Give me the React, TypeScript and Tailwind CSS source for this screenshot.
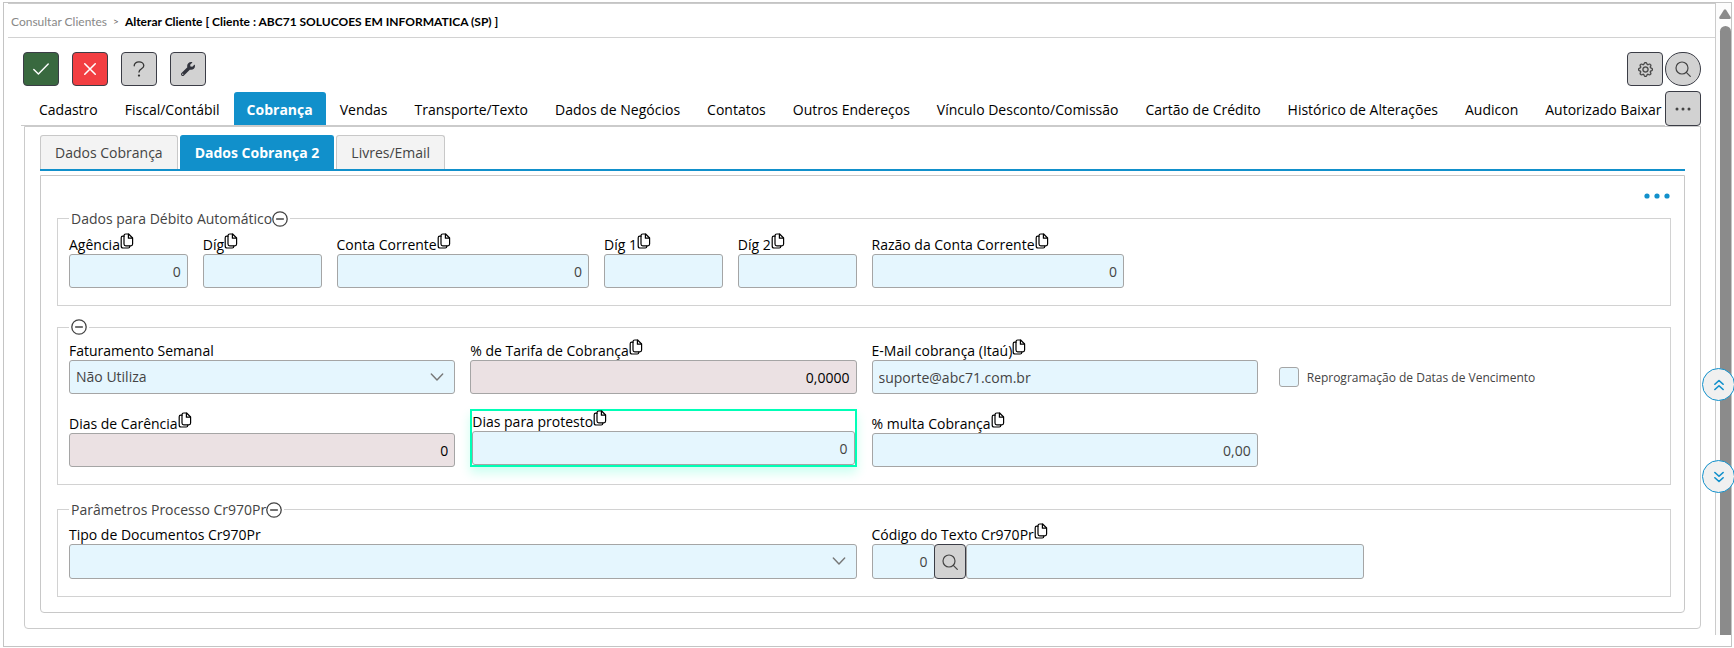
import type { ReactNode, SVGProps } from "react";
import { FaWrench } from "react-icons/fa";
import { BsGear } from "react-icons/bs";
import clsx from "clsx";

const tabs = [
  "Cadastro",
  "Fiscal/Contábil",
  "Cobrança",
  "Vendas",
  "Transporte/Texto",
  "Dados de Negócios",
  "Contatos",
  "Outros Endereços",
  "Vínculo Desconto/Comissão",
  "Cartão de Crédito",
  "Histórico de Alterações",
  "Audicon",
  "Autorizado Baixar",
];

const subTabs = ["Dados Cobrança", "Dados Cobrança 2", "Livres/Email"];

function Icon(props: SVGProps<SVGSVGElement>) {
  return (
    <svg
      viewBox="0 0 16 16"
      fill="none"
      stroke="currentColor"
      strokeLinecap="round"
      strokeLinejoin="round"
      aria-hidden="true"
      {...props}
    />
  );
}

function CopyIcon() {
  return (
    <Icon className="h-4 w-3.5" viewBox="0 0 14 16" strokeWidth="1.2">
      <path d="M4 3.2H2.8Q1.2 3.2 1.2 4.8V13Q1.2 15 3 15H8.2Q9.8 15 9.8 13.2" />
      <path d="M8.6 1H5.8Q4 1 4 2.8V11Q4 12.8 5.8 12.8H10.8Q12.6 12.8 12.6 11V5Z" />
      <path d="M8.4 1.2V5.2H12.4" />
    </Icon>
  );
}

function SearchIcon({ className }: { className: string }) {
  return (
    <Icon className={className} strokeWidth="1.2">
      <circle cx="7" cy="7" r="6" />
      <path d="M11.3 11.3L15.3 15.3" />
    </Icon>
  );
}

function ToolButton({
  label,
  className,
  children,
}: {
  label: string;
  className: string;
  children: ReactNode;
}) {
  return (
    <button
      type="button"
      aria-label={label}
      className={clsx(
        "flex h-[34px] w-9 items-center justify-center border border-[#3b3d46]",
        className
      )}
    >
      {children}
    </button>
  );
}

function Group({
  title,
  legendClass,
  className,
  children,
}: {
  title?: string;
  legendClass: string;
  className?: string;
  children: ReactNode;
}) {
  return (
    <fieldset
      className={clsx(
        "min-w-0 border border-[#d2d2d2] px-[11px] pb-[17px]",
        className
      )}
    >
      <legend className={clsx("px-0.5 text-[#444]", legendClass)}>
        <span className="flex h-full items-center">
          {title}
          <button type="button" aria-label="Recolher">
            <Icon className="size-4" strokeWidth="1.3">
              <circle cx="8" cy="8" r="7.2" />
              <path d="M4.6 8H11.4" />
            </Icon>
          </button>
        </span>
      </legend>
      <div className="grid grid-cols-12 items-end gap-x-[15px] gap-y-[15px] pt-1">
        {children}
      </div>
    </fieldset>
  );
}

function Field({
  id,
  label,
  className,
  copy = true,
  children,
}: {
  id: string;
  label: string;
  className: string;
  copy?: boolean;
  children: ReactNode;
}) {
  return (
    <div className={className}>
      <div className="flex h-5 items-start whitespace-nowrap text-black">
        <label htmlFor={id} className="leading-[22px]">
          {label}
        </label>
        {copy && (
          <button type="button" aria-label={`Copiar ${label}`} className="-mt-px">
            <CopyIcon />
          </button>
        )}
      </div>
      {children}
    </div>
  );
}

function TextBox({
  id,
  value = "",
  right,
  disabled,
  label,
  className = "h-[34px] w-full",
}: {
  id: string;
  value?: string;
  right?: boolean;
  disabled?: boolean;
  label?: string;
  className?: string;
}) {
  return (
    <input
      id={id}
      type="text"
      defaultValue={value}
      readOnly={disabled}
      aria-label={label}
      className={clsx(
        "block min-w-0 rounded-[3px] border border-[#a5a5a5] px-1.5",
        right && "text-right",
        disabled ? "bg-[#ebe1e3] text-black" : "bg-[#e5f6fe] text-[#444]",
        className
      )}
    />
  );
}

function SelectBox({
  id,
  options,
  className = "h-[34px]",
}: {
  id: string;
  options: string[];
  className?: string;
}) {
  return (
    <div className="relative">
      <select
        id={id}
        className={clsx(
          "block w-full appearance-none rounded-[3px] border border-[#a5a5a5] bg-[#e5f6fe] px-1.5 text-[#444]",
          className
        )}
      >
        {options.map((o) => (
          <option key={o}>{o}</option>
        ))}
      </select>
      <Icon
        className="pointer-events-none absolute top-2.5 right-[11px] size-3.5 text-[#777]"
        strokeWidth="1.6"
      >
        <path d="M1.5 4.5L8 11.5L14.5 4.5" />
      </Icon>
    </div>
  );
}

export default function App() {
  return (
    <div className="bg-white pt-0.5 pr-0.5 pb-px pl-[3px] font-['Open_Sans','Segoe_UI',sans-serif] text-sm text-[#444]">
      <div className="relative border border-[#c4c4c4] pb-[11px] pl-1">
        <div className="flex">
          <main className="min-w-0 flex-1 border-t border-r border-[#cbcbcb] pb-1.5">
            <nav className="flex h-[34px] items-center gap-1.5 border-b border-[#d2d2d2] pt-0.5 pl-[3px] font-[Lato,sans-serif] text-xs">
              <a href="#" className="text-[#888]">
                Consultar Clientes
              </a>
              <span className="text-[10px] text-[#666]">&gt;</span>
              <span className="font-bold text-black">
                Alterar Cliente [ Cliente : ABC71 SOLUCOES EM INFORMATICA (SP) ]
              </span>
            </nav>

            <div className="flex items-center gap-[13px] pt-3.5 pr-3.5 pl-[15px]">
              <ToolButton label="Confirmar" className="rounded bg-[#39693f] text-white">
                <Icon className="size-4" strokeWidth="1.4">
                  <path d="M0.8 8.4L5.4 13L15.2 3" />
                </Icon>
              </ToolButton>
              <ToolButton label="Cancelar" className="rounded bg-[#f23e42] text-white">
                <Icon className="size-3.5" strokeWidth="1.8">
                  <path d="M2 2L14 14M14 2L2 14" />
                </Icon>
              </ToolButton>
              <ToolButton label="Ajuda" className="rounded bg-[#d2d2d2] text-[#333]">
                <Icon className="size-4" strokeWidth="1.3">
                  <path d="M3.2 4.8C3.2 2.4 5.2 0.8 8 0.8S12.8 2.4 12.8 4.8C12.8 7.8 8 7.6 8 11" />
                  <circle cx="8" cy="14.6" r="0.5" fill="currentColor" />
                </Icon>
              </ToolButton>
              <ToolButton label="Ferramentas" className="rounded bg-[#d2d2d2] text-[#33353e]">
                <FaWrench className="size-3.5" />
              </ToolButton>
              <div className="ml-auto flex gap-0.5">
                <ToolButton label="Configurações" className="rounded bg-[#d2d2d2]">
                  <BsGear className="size-[15px]" stroke="currentColor" strokeWidth="0.4" />
                </ToolButton>
                <ToolButton label="Pesquisar" className="rounded-full bg-[#d2d2d2]">
                  <SearchIcon className="size-4" />
                </ToolButton>
              </div>
            </div>

            <div className="mt-[5px] flex pr-3.5 pl-[13px]">
              <div className="flex h-[35px] min-w-0 flex-1 items-end gap-px overflow-hidden border-b border-[#cbcbcb] pl-[5px]">
                {tabs.map((tab) => (
                  <button
                    key={tab}
                    type="button"
                    className={clsx(
                      "h-[33px] shrink-0 rounded-t-[3px] px-[13px] pt-0.5 whitespace-nowrap last:pr-0",
                      tab === "Cobrança"
                        ? "bg-[#1190cb] font-bold text-white"
                        : "text-black"
                    )}
                  >
                    {tab}
                  </button>
                ))}
              </div>
              <button
                type="button"
                aria-label="Mais abas"
                className="flex h-[35px] w-9 shrink-0 items-center justify-center rounded border border-[#3b3d46] bg-[#d2d2d2]"
              >
                <svg className="h-1 w-4" viewBox="0 0 16 4" fill="currentColor">
                  <circle cx="2" cy="2" r="1.5" />
                  <circle cx="8" cy="2" r="1.5" />
                  <circle cx="14" cy="2" r="1.5" />
                </svg>
              </button>
            </div>

            <section className="mr-3.5 ml-4 rounded-b border border-[#cbcbcb] px-[15px] pt-2 pb-[15px]">
              <div className="flex gap-0.5 border-b-2 border-[#1190cb]">
                {subTabs.map((tab) => (
                  <button
                    key={tab}
                    type="button"
                    className={clsx(
                      "h-[34px] rounded-t-[3px] border border-b-0 px-3.5",
                      tab === "Dados Cobrança 2"
                        ? "border-[#1190cb] bg-[#1190cb] font-bold text-white"
                        : "border-[#c8c8c8] bg-[#f3f3f3]"
                    )}
                  >
                    {tab}
                  </button>
                ))}
              </div>

              <div className="mt-1 rounded-b border border-[#c8c8c8] pr-[13px] pb-[15px] pl-4">
                <div className="flex h-[30px] justify-end pt-3">
                  <button
                    type="button"
                    aria-label="Opções"
                    className="flex h-4 items-center text-[#1190cb]"
                  >
                    <svg className="h-1.5 w-7" viewBox="0 0 28 6" fill="currentColor">
                      <circle cx="4" cy="3" r="2.6" />
                      <circle cx="14" cy="3" r="2.6" />
                      <circle cx="24" cy="3" r="2.6" />
                    </svg>
                  </button>
                </div>

                <Group title="Dados para Débito Automático" legendClass="h-6 pt-0.5">
                  <Field id="agencia" label="Agência" className="col-span-1">
                    <TextBox id="agencia" value="0" right />
                  </Field>
                  <Field id="dig" label="Díg" className="col-span-1">
                    <TextBox id="dig" />
                  </Field>
                  <Field id="conta" label="Conta Corrente" className="col-span-2">
                    <TextBox id="conta" value="0" right />
                  </Field>
                  <Field id="dig1" label="Díg 1" className="col-span-1">
                    <TextBox id="dig1" />
                  </Field>
                  <Field id="dig2" label="Díg 2" className="col-span-1">
                    <TextBox id="dig2" />
                  </Field>
                  <Field id="razao" label="Razão da Conta Corrente" className="col-span-2">
                    <TextBox id="razao" value="0" right />
                  </Field>
                </Group>

                <Group legendClass="h-[18px]" className="mt-3">
                  <Field
                    id="faturamento"
                    label="Faturamento Semanal"
                    className="col-span-3"
                    copy={false}
                  >
                    <SelectBox id="faturamento" options={["Não Utiliza"]} />
                  </Field>
                  <Field id="tarifa" label="% de Tarifa de Cobrança" className="col-span-3">
                    <TextBox id="tarifa" value="0,0000" right disabled />
                  </Field>
                  <Field id="email" label="E-Mail cobrança (Itaú)" className="col-span-3">
                    <TextBox id="email" value="suporte@abc71.com.br" />
                  </Field>
                  <div className="col-span-3 flex h-[34px] items-center gap-2 pl-1.5">
                    <input
                      id="reprogramacao"
                      type="checkbox"
                      className="size-5 shrink-0 appearance-none rounded-[3px] border border-[#a5a5a5] bg-[#e5f6fe]"
                    />
                    <label htmlFor="reprogramacao" className="pt-0.5 text-xs">
                      Reprogramação de Datas de Vencimento
                    </label>
                  </div>
                  <Field id="carencia" label="Dias de Carência" className="col-span-3">
                    <TextBox id="carencia" value="0" right disabled />
                  </Field>
                  <Field
                    id="protesto"
                    label="Dias para protesto"
                    className="col-span-3 border-2 border-[#00ffb7] shadow-[0_6px_10px_rgba(0,255,183,0.2)]"
                  >
                    <TextBox id="protesto" value="0" right />
                  </Field>
                  <Field id="multa" label="% multa Cobrança" className="col-span-3">
                    <TextBox id="multa" value="0,00" right />
                  </Field>
                </Group>

                <Group
                  title="Parâmetros Processo Cr970Pr"
                  legendClass="h-[22px] pt-0.5"
                  className="mt-[13px]"
                >
                  <Field
                    id="tipo"
                    label="Tipo de Documentos Cr970Pr"
                    className="col-span-6"
                    copy={false}
                  >
                    <SelectBox id="tipo" options={[""]} className="h-[35px]" />
                  </Field>
                  <Field
                    id="codigo"
                    label="Código do Texto Cr970Pr"
                    className="col-span-4 pr-7"
                  >
                    <div className="flex">
                      <TextBox id="codigo" value="0" right className="h-[35px] w-[63px]" />
                      <button
                        type="button"
                        aria-label="Buscar texto"
                        className="-ml-px flex h-[35px] w-8 shrink-0 items-center justify-center rounded border border-[#3b3d46] bg-[#d2d2d2]"
                      >
                        <SearchIcon className="size-4" />
                      </button>
                      <TextBox
                        id="descricao"
                        label="Descrição do texto"
                        className="h-[35px] flex-1"
                      />
                    </div>
                  </Field>
                </Group>
              </div>
            </section>
          </main>

          <div className="flex w-[15px] shrink-0 flex-col items-end bg-[#fcfcfc] pt-1.5">
            <svg className="h-2.5 w-3" viewBox="0 0 12 10" fill="#8b8b8b">
              <path d="M5 0.8Q6 -0.4 7 0.8L11.6 8Q12.2 10 10.6 10H1.4Q-0.2 10 0.4 8Z" />
            </svg>
            <div className="mt-[7px] w-[11px] flex-1 rounded-t-md bg-[#8b8b8b]" />
          </div>
        </div>

        {/* floating scroll shortcuts, over the scrollbar */}
        <div className="absolute top-[365px] -right-1 flex flex-col gap-[59px]">
          <button
            type="button"
            aria-label="Ir para o topo"
            className="flex size-[33px] items-center justify-center rounded-full border border-[#1190cb] bg-[#f0f0f0] text-[#1190cb]"
          >
            <Icon className="size-3" strokeWidth="2.2">
              <path d="M2.5 7L8 2L13.5 7M2.5 14L8 9L13.5 14" />
            </Icon>
          </button>
          <button
            type="button"
            aria-label="Ir para o fim"
            className="flex size-[33px] items-center justify-center rounded-full border border-[#1190cb] bg-[#f0f0f0] text-[#1190cb]"
          >
            <Icon className="size-3" strokeWidth="2.2">
              <path d="M2.5 2L8 7L13.5 2M2.5 9L8 14L13.5 9" />
            </Icon>
          </button>
        </div>
      </div>
    </div>
  );
}
